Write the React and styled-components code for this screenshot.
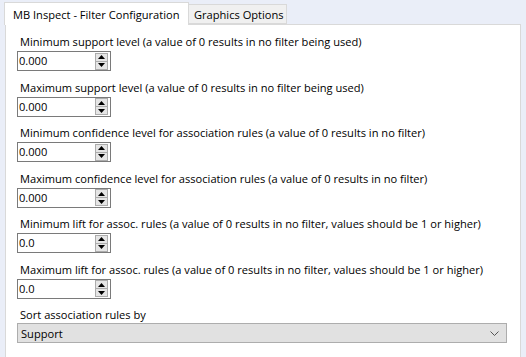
import styled, { createGlobalStyle } from 'styled-components';

const GlobalStyle = createGlobalStyle`
  html, body {
    margin: 0;
    padding: 0;
    background: #eaeef8;
    overflow: hidden;
  }
  body {
    font-family: 'Open Sans', 'Noto Sans', sans-serif;
    font-size: 11.1px;
    color: #000;
  }
`;

const Window = styled.div`
  width: 526px;
  height: 357px;
  padding: 2px 0 0 4px;
  box-sizing: border-box;
  display: flex;
  flex-direction: column;
  overflow: hidden;
`;

const TabStrip = styled.div`
  display: flex;
  align-items: flex-end;
  height: 22px;
  flex-shrink: 0;
  position: relative;
  z-index: 1;
`;

const Tab = styled.div`
  box-sizing: border-box;
  height: ${(p) => (p.$active ? '23px' : '20px')};
  margin-bottom: ${(p) => (p.$active ? '-1px' : '0')};
  padding: 0 ${(p) => (p.$active ? '8px 0 8px' : '5px')};
  width: ${(p) => (p.$active ? '185px' : '98px')};
  display: flex;
  align-items: center;
  background: ${(p) => (p.$active ? '#fff' : '#f0f0f0')};
  border: 1px solid #d9d9d9;
  border-bottom: ${(p) => (p.$active ? 'none' : '1px solid #d9d9d9')};
  border-left: ${(p) => (p.$active ? '1px solid #d9d9d9' : 'none')};
  white-space: nowrap;
`;

const Panel = styled.div`
  width: 516px;
  height: 345px;
  flex-shrink: 0;
  margin-left: 1px;
  box-sizing: border-box;
  background: #fff;
  border: 1px solid #d9d9d9;
  padding: 9px 0 0 11px;
  display: flex;
  flex-direction: column;
  gap: 8.5px;
`;

const Group = styled.div`
  display: flex;
  flex-direction: column;
  gap: ${(p) => (p.$tight ? '0' : '1px')};
`;

const Label = styled.div`
  line-height: 16px;
  height: 16px;
  padding-left: 3px;
  white-space: nowrap;
`;

const Spin = styled.div`
  width: 94px;
  height: 20px;
  box-sizing: border-box;
  border: 1px solid #7a7a7a;
  background: #fff;
  display: flex;
  align-items: center;
  justify-content: space-between;
  padding: 0 1px;
`;

const SpinValue = styled.span`
  line-height: 18px;
`;

const SpinButtons = styled.div`
  display: flex;
  flex-direction: column;
  width: 13px;
  margin-right: 1px;
`;

const SpinButton = styled.div`
  height: 9px;
  box-sizing: border-box;
  border: 1px solid #acacac;
  margin-top: ${(p) => (p.$down ? '-1px' : '0')};
  background: #e5e5e5;
  display: flex;
  align-items: center;
  justify-content: center;
`;

const Arrow = ({ down }) => (
  <svg width="7" height="4" viewBox="0 0 7 4">
    <polygon points={down ? '0,0 7,0 3.5,4' : '0,4 7,4 3.5,0'} fill="#000" />
  </svg>
);

const Combo = styled.div`
  width: 490px;
  height: 20px;
  box-sizing: border-box;
  border: 1px solid #adadad;
  background: #e1e1e1;
  display: flex;
  align-items: center;
  justify-content: space-between;
  padding: 0 7px 0 3px;
`;

const fields = [
  ['Minimum support level (a value of 0 results in no filter being used)', '0.000'],
  ['Maximum support level (a value of 0 results in no filter being used)', '0.000'],
  ['Minimum confidence level for association rules (a value of 0 results in no filter)', '0.000'],
  ['Maximum confidence level for association rules (a value of 0 results in no filter)', '0.000'],
  ['Minimum lift for assoc. rules (a value of 0 results in no filter, values should be 1 or higher)', '0.0'],
  ['Maximum lift for assoc. rules (a value of 0 results in no filter, values should be 1 or higher)', '0.0'],
];

export default function App() {
  return (
    <>
      <GlobalStyle />
      <Window>
        <TabStrip>
          <Tab $active>MB Inspect - Filter Configuration</Tab>
          <Tab>Graphics Options</Tab>
        </TabStrip>
        <Panel>
          {fields.map(([label, value]) => (
            <Group key={label}>
              <Label>{label}</Label>
              <Spin>
                <SpinValue>{value}</SpinValue>
                <SpinButtons>
                  <SpinButton>
                    <Arrow />
                  </SpinButton>
                  <SpinButton $down>
                    <Arrow down />
                  </SpinButton>
                </SpinButtons>
              </Spin>
            </Group>
          ))}
          <Group $tight>
            <Label>Sort association rules by</Label>
            <Combo>
              <span>Support</span>
              <svg width="9" height="5" viewBox="0 0 9 5">
                <polyline points="0.5,0.5 4.5,4.5 8.5,0.5" fill="none" stroke="#555" strokeWidth="1" />
              </svg>
            </Combo>
          </Group>
        </Panel>
      </Window>
    </>
  );
}
